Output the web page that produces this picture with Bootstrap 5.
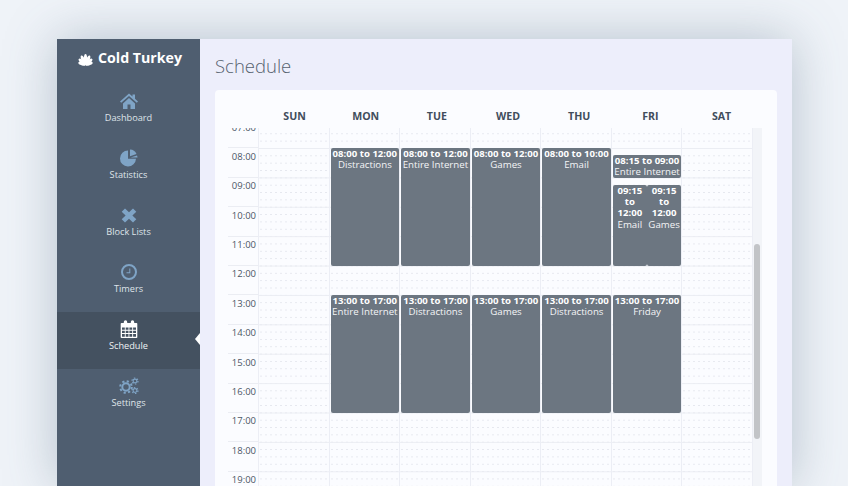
<!DOCTYPE html>
<html lang="en">
<head>
<meta charset="utf-8">
<title>Cold Turkey Schedule</title>
<link href="https://cdn.jsdelivr.net/npm/bootstrap@5.3.0/dist/css/bootstrap.min.css" rel="stylesheet">
<style>
html,body{height:486px;overflow:hidden}
body{background:#eff3f8;font-family:"Open Sans","Liberation Sans",sans-serif;padding:39px 56px 0 57px}
.app-win{height:447px;box-shadow:0 0 48px rgba(80,105,130,.36);background:#edeefb}
.side{width:143px;background:#4f5e70;flex:none}
.brand{height:45px;color:#fff;font-weight:700;font-size:14.2px;padding:10px 0 0 20px;gap:4px;line-height:18px;white-space:nowrap}
.side-item{height:57px;color:#dfe4e9;font-size:9.2px;line-height:12px;padding-top:8px;position:relative}
.side-item svg{height:18px;width:20px;margin-bottom:1.500px;fill:#7fa4c6;display:block}
.side-item.on{background:#445160;color:#eef1f4}
.side-item.on svg{fill:#fff}
.side-item.on::after{content:"";position:absolute;right:0;top:21px;border:6px solid transparent;border-left-width:0;border-right:5px solid #fff}
.gear-part{fill:none;stroke:#7fa4c6}
.content{padding:14px 15px 0;min-width:0}
.page-ttl{font-size:18.500px;font-weight:300;color:#56626f;line-height:26px;margin:0 0 11px}
.cal-card{background:#fbfcff;border-radius:4px 4px 0 0;flex:1;padding-right:15px;min-height:0}
.cal-head{height:38px;padding-left:44px;color:#414d5c;font-weight:700;font-size:10.6px;padding-top:19px;line-height:14px}
.cal-head span{width:71.17px;text-align:center;flex:none}
.cal-body{flex:1;overflow:hidden;min-height:0}
.times{width:44px;flex:none;margin-top:-10px;font-size:9.5px;color:#4b5665;border-right:1px solid #eceef5;height:400px}
.times div{height:29.4px;padding:2.500px 2px 0 0;line-height:13px;text-align:right;background:linear-gradient(#ebedf3,#ebedf3) no-repeat right top/30px 1px}
.day{width:70.57px;flex:none;position:relative;border-right:1px solid #eceef5;
background-image:linear-gradient(#ebedf3 1px,transparent 1px),conic-gradient(from 270deg at 2px 1px,#e6e8ef 90deg,transparent 0);
background-size:100% 29.4px,5px 7.35px;background-position:0 20px,1px 20px}
.ev{position:absolute;left:1px;right:0;background:#6c7681;border-radius:2px;color:#f4f5f7;font-size:9.7px;line-height:11.2px;text-align:center;overflow:hidden}
.ev b{display:block;font-weight:700;color:#fff;font-size:9.6px}
.scroll-track{width:9px;flex:none;background:#f2f4f8;position:relative}
.scroll-thumb{position:absolute;left:1px;width:6px;top:116px;height:195px;background:#c2c4c7;border-radius:3px}
</style>
</head>
<body>
<div class="app-win d-flex">
  <aside class="side d-flex flex-column">
    <div class="brand d-flex align-items-start">
      <svg width="17" height="13" viewBox="0 0 17 13" class="mt-1" fill="#fff"><ellipse cx="8.500" cy="6.500" rx="1.700" ry="5.500"/><ellipse cx="8.500" cy="6.800" rx="1.700" ry="5.200" transform="rotate(-24 8.500 12)"/><ellipse cx="8.500" cy="6.800" rx="1.700" ry="5.200" transform="rotate(24 8.500 12)"/><ellipse cx="8.500" cy="7.500" rx="1.700" ry="4.500" transform="rotate(-48 8.500 12)"/><ellipse cx="8.500" cy="7.500" rx="1.700" ry="4.500" transform="rotate(48 8.500 12)"/><ellipse cx="8.500" cy="8.200" rx="1.600" ry="3.800" transform="rotate(-72 8.500 12)"/><ellipse cx="8.500" cy="8.200" rx="1.600" ry="3.800" transform="rotate(72 8.500 12)"/></svg>
      <span>Cold Turkey</span>
    </div>
    <nav class="d-flex flex-column">
      <a class="side-item text-decoration-none d-flex flex-column align-items-center"><svg viewBox="0 0 20 18"><path d="M10 1.500 1 9.500l1.200 1.300L10 4l7.800 6.800L19 9.500l-3-2.700V2.500h-2.500v2.100Z"/><path d="M4 11.500 10 6l6 5.500V17h-4.500v-4.500h-3V17H4Z"/></svg>Dashboard</a>
      <a class="side-item text-decoration-none d-flex flex-column align-items-center"><svg viewBox="0 0 20 18"><path d="M9 1.500A8 8 0 1 0 17 9.800H9Z"/><path d="M11 .5a7.500 7.500 0 0 1 6.500 4.500L11 7.200Z"/><path d="M11.500 8.500 18 6.400a8 8 0 0 1 .5 2.100Z"/></svg>Statistics</a>
      <a class="side-item text-decoration-none d-flex flex-column align-items-center"><svg viewBox="0 0 20 18"><path d="M6 2.500 10 6.300l4-3.800 3.300 3.200L13.400 9.500l3.900 3.800L14 16.500l-4-3.800-4 3.800-3.300-3.200 3.900-3.800-3.900-3.800Z"/></svg>Block Lists</a>
      <a class="side-item text-decoration-none d-flex flex-column align-items-center"><svg viewBox="0 0 20 18"><path fill-rule="evenodd" d="M10 1a8 8 0 1 1 0 16 8 8 0 0 1 0-16Zm0 2a6 6 0 1 0 0 12 6 6 0 0 0 0-12Z"/><path d="M10.300 5.500h1v4.800H7.500v-1h2.800Z"/></svg>Timers</a>
      <a class="side-item on text-decoration-none d-flex flex-column align-items-center"><svg viewBox="0 0 20 18"><path fill-rule="evenodd" d="M2.500 3H4.800V2a1.700 1.700 0 0 1 3.400 0v1h3.600V2a1.700 1.700 0 0 1 3.400 0v1h2.300a.8.8 0 0 1 .8.8V17.200a.8.8 0 0 1-.8.8H2.500a.8.8 0 0 1-.8-.8V3.800A.8.8 0 0 1 2.500 3ZM3 7.500v2.300h2.800V7.500Zm3.700 0v2.300h2.800V7.500Zm3.700 0v2.300h2.800V7.500Zm3.700 0v2.300h2.900V7.500ZM3 10.700v2.300h2.800v-2.300Zm3.700 0v2.300h2.800v-2.300Zm3.700 0v2.300h2.800v-2.300Zm3.700 0v2.300h2.900v-2.300ZM3 13.900v2.800h2.800v-2.800Zm3.700 0v2.800h2.800v-2.800Zm3.700 0v2.800h2.800v-2.800Zm3.700 0v2.800h2.900v-2.800Z"/></svg>Schedule</a>
      <a class="side-item text-decoration-none d-flex flex-column align-items-center"><svg viewBox="0 0 20 18"><circle class="gear-part" cx="7" cy="10" r="5.800" stroke-width="2" stroke-dasharray="2.200 2.360"/><circle class="gear-part" cx="7" cy="10" r="3.700" stroke-width="2"/><circle class="gear-part" cx="16" cy="4" r="3" stroke-width="1.200" stroke-dasharray="1.500 1.640"/><circle class="gear-part" cx="16" cy="4" r="1.900" stroke-width="1.100"/><circle class="gear-part" cx="16" cy="13.500" r="3" stroke-width="1.200" stroke-dasharray="1.500 1.640"/><circle class="gear-part" cx="16" cy="13.500" r="1.900" stroke-width="1.100"/></svg>Settings</a>
    </nav>
  </aside>
  <main class="content flex-grow-1 d-flex flex-column">
    <h1 class="page-ttl">Schedule</h1>
    <section class="cal-card d-flex flex-column">
      <div class="cal-head d-flex"><span>SUN</span><span>MON</span><span>TUE</span><span>WED</span><span>THU</span><span>FRI</span><span>SAT</span></div>
      <div class="cal-body d-flex">
        <div class="times"><div>07:00</div><div>08:00</div><div>09:00</div><div>10:00</div><div>11:00</div><div>12:00</div><div>13:00</div><div>14:00</div><div>15:00</div><div>16:00</div><div>17:00</div><div>18:00</div><div>19:00</div></div>
        <div class="day"></div>
        <div class="day">
          <div class="ev" style="top:20px;height:118px"><b>08:00 to 12:00</b>Distractions</div>
          <div class="ev" style="top:167px;height:118px"><b>13:00 to 17:00</b>Entire Internet</div>
        </div>
        <div class="day">
          <div class="ev" style="top:20px;height:118px"><b>08:00 to 12:00</b>Entire Internet</div>
          <div class="ev" style="top:167px;height:118px"><b>13:00 to 17:00</b>Distractions</div>
        </div>
        <div class="day">
          <div class="ev" style="top:20px;height:118px"><b>08:00 to 12:00</b>Games</div>
          <div class="ev" style="top:167px;height:118px"><b>13:00 to 17:00</b>Games</div>
        </div>
        <div class="day">
          <div class="ev" style="top:20px;height:118px"><b>08:00 to 10:00</b>Email</div>
          <div class="ev" style="top:167px;height:118px"><b>13:00 to 17:00</b>Distractions</div>
        </div>
        <div class="day">
          <div class="ev" style="top:27px;height:23px"><b>08:15 to 09:00</b>Entire Internet</div>
          <div class="ev" style="top:57px;height:81px;right:34.500px"><b>09:15 to 12:00</b>Email</div>
          <div class="ev" style="top:57px;height:81px;left:35px"><b>09:15 to 12:00</b>Games</div>
          <div class="ev" style="top:167px;height:118px"><b>13:00 to 17:00</b>Friday</div>
        </div>
        <div class="day"></div>
        <div class="scroll-track"><div class="scroll-thumb"></div></div>
      </div>
    </section>
  </main>
</div>
<script src="https://cdn.jsdelivr.net/npm/bootstrap@5.3.0/dist/js/bootstrap.bundle.min.js"></script>
</body>
</html>
